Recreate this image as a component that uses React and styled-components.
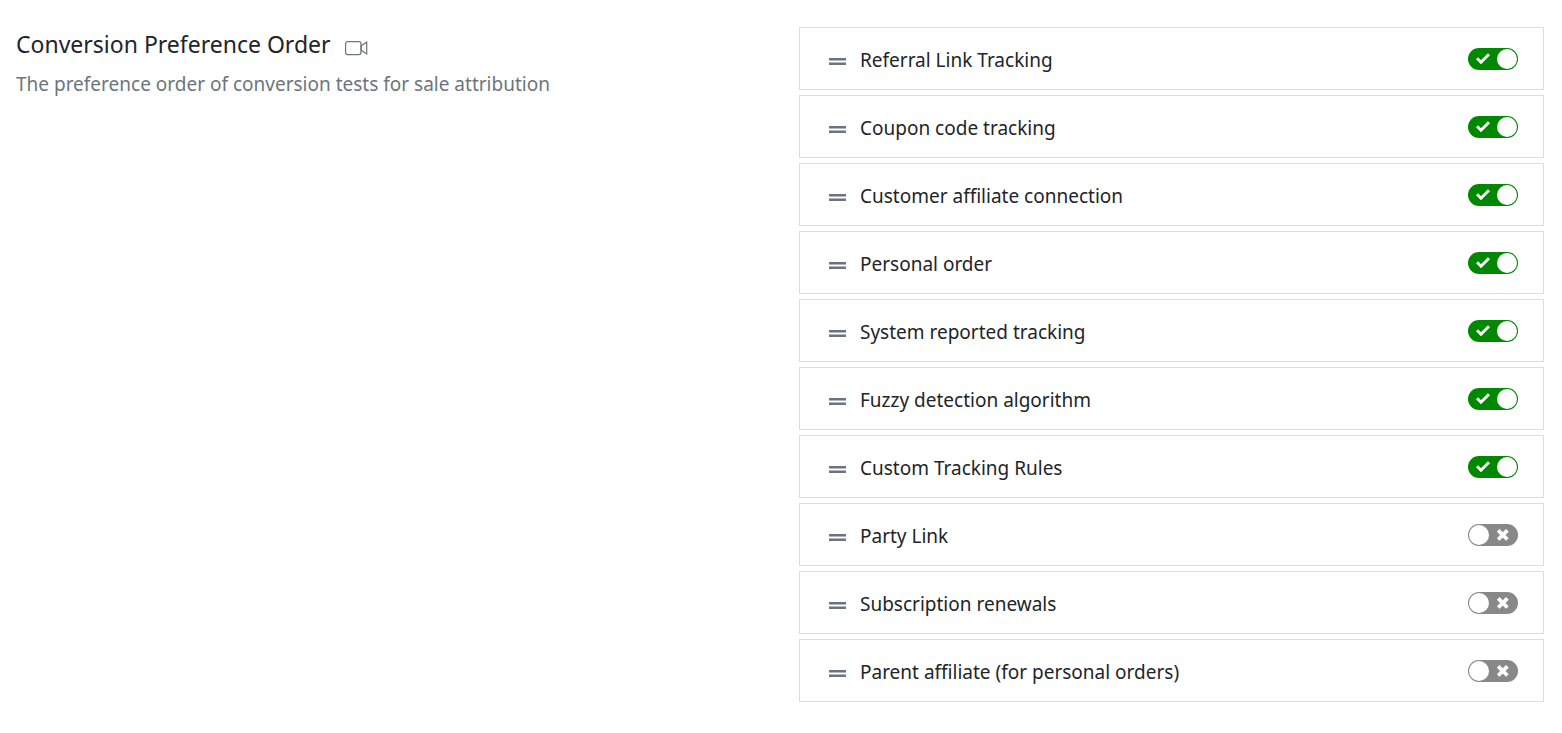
import React, { useState } from "react";
import styled, { createGlobalStyle } from "styled-components";

const GlobalStyle = createGlobalStyle`
  *, *::before, *::after { box-sizing: border-box; }
  body {
    margin: 0;
    background: #ffffff;
    color: #212529;
    font-family: "Segoe UI", "Noto Sans", "Open Sans", sans-serif;
    font-size: 19px;
    line-height: 30px;
  }
`;

const Page = styled.main`
  display: grid;
  grid-template-columns: 1fr 1fr;
  padding: 27px 0 31px;
`;

const Intro = styled.section`
  padding: 0 16px;
`;

const TitleRow = styled.div`
  display: flex;
  align-items: center;
  gap: 14px;
`;

const Title = styled.h1`
  margin: 0;
  font-size: 23px;
  font-weight: 400;
  line-height: 34px;
`;

const VideoLink = styled.a`
  display: flex;
  padding-top: 8px;
  color: #6c757d;
`;

const Description = styled.p`
  margin: 8px 0 0;
  color: #6c757d;
`;

const List = styled.ul`
  display: flex;
  flex-direction: column;
  gap: 5px;
  margin: 0;
  padding: 0 18px;
  list-style: none;
`;

const Item = styled.li`
  display: flex;
  align-items: center;
  min-height: 63px;
  padding: 0 25px 0 29px;
  border: 1px solid #dddddd;
`;

const Handle = styled.button`
  display: flex;
  flex: none;
  margin: 0 14px 0 0;
  padding: 6px 0 0;
  border: 0;
  background: none;
  color: #6c757d;
  cursor: grab;
`;

const Label = styled.label`
  flex: 1;
  padding-top: 2px;
`;

const Switch = styled.span`
  display: grid;
  flex: none;
  width: 50px;
  height: 22px;
  & > * { grid-area: 1 / 1; }
`;

const SwitchInput = styled.input`
  appearance: none;
  width: 50px;
  height: 22px;
  margin: 0;
  padding: 1px;
  border-radius: 11px;
  background: #888888;
  cursor: pointer;

  &::before {
    content: "";
    display: block;
    width: 20px;
    height: 20px;
    border-radius: 50%;
    background: #ffffff;
  }
  &:checked { background: #008800; }
  &:checked::before { margin-left: 28px; }
`;

const Mark = styled.svg`
  align-self: center;
  justify-self: ${(p) => (p.$on ? "start" : "end")};
  margin: 0 8px;
  pointer-events: none;
`;

const initialTests = [
  { id: "referral", name: "Referral Link Tracking", on: true },
  { id: "coupon", name: "Coupon code tracking", on: true },
  { id: "customer", name: "Customer affiliate connection", on: true },
  { id: "personal", name: "Personal order", on: true },
  { id: "system", name: "System reported tracking", on: true },
  { id: "fuzzy", name: "Fuzzy detection algorithm", on: true },
  { id: "custom", name: "Custom Tracking Rules", on: true },
  { id: "party", name: "Party Link", on: false },
  { id: "subscription", name: "Subscription renewals", on: false },
  { id: "parent", name: "Parent affiliate (for personal orders)", on: false },
];

function VideoIcon() {
  return (
    <svg width="23" height="16" viewBox="0 0 23 16" fill="none" stroke="currentColor" strokeWidth="1.2" aria-hidden="true">
      <rect x="0.6" y="1.6" width="15.3" height="13" rx="2" />
      <path d="M16.4 5.6 L21.7 2.2 V14 L16.4 10.6 Z" />
    </svg>
  );
}

function ToggleMark({ on }) {
  return (
    <Mark $on={on} width="14" height="12" viewBox="0 0 14 12" fill="none" stroke="#ffffff" strokeWidth="3" aria-hidden="true">
      {on ? <path d="M1 5.2 L5 9.2 L13 1.2" /> : <path d="M2.2 1.3 L11.4 10.5 M11.4 1.3 L2.2 10.5" strokeWidth="3.8" />}
    </Mark>
  );
}

export default function App() {
  const [tests, setTests] = useState(initialTests);
  const toggle = (id) =>
    setTests((all) => all.map((t) => (t.id === id ? { ...t, on: !t.on } : t)));

  return (
    <>
      <GlobalStyle />
      <Page>
        <Intro>
          <TitleRow>
            <Title>Conversion Preference Order</Title>
            <VideoLink href="#video" aria-label="Watch video">
              <VideoIcon />
            </VideoLink>
          </TitleRow>
          <Description>The preference order of conversion tests for sale attribution</Description>
        </Intro>
        <List>
          {tests.map((test) => (
            <Item key={test.id}>
              <Handle type="button" aria-label={`Move ${test.name}`}>
                <svg width="17" height="7" viewBox="0 0 17 7" fill="currentColor" aria-hidden="true">
                  <rect width="17" height="2.5" />
                  <rect y="4.5" width="17" height="2.5" />
                </svg>
              </Handle>
              <Label htmlFor={test.id}>{test.name}</Label>
              <Switch>
                <SwitchInput
                  id={test.id}
                  type="checkbox"
                  role="switch"
                  checked={test.on}
                  onChange={() => toggle(test.id)}
                />
                <ToggleMark on={test.on} />
              </Switch>
            </Item>
          ))}
        </List>
      </Page>
    </>
  );
}
